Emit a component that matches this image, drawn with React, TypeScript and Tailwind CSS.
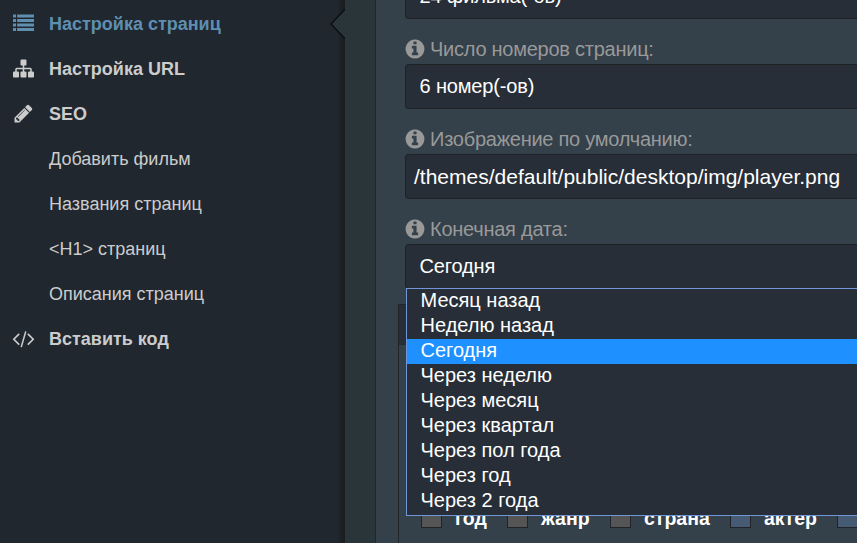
import type { ReactNode } from "react";

function Icon({ d, size, className = "" }: { d: string; size: number; className?: string }) {
  return (
    <svg width={size} height={size} viewBox="0 0 1792 1792" fill="currentColor" className={`shrink-0 overflow-visible ${className}`}>
      <path d={d} />
    </svg>
  );
}

const LIST =
  "M0 128h256v256h-256zM0 512h256v256h-256zM0 896h256v256h-256zM0 1280h256v256h-256zM350 128h1442v256h-1442zM350 512h1442v256h-1442zM350 896h1442v256h-1442zM350 1280h1442v256h-1442z";
const SITEMAP =
  "M1792 1248v320q0 40-28 68t-68 28h-320q-40 0-68-28t-28-68v-320q0-40 28-68t68-28h96v-192h-512v192h96q40 0 68 28t28 68v320q0 40-28 68t-68 28h-320q-40 0-68-28t-28-68v-320q0-40 28-68t68-28h96v-192h-512v192h96q40 0 68 28t28 68v320q0 40-28 68t-68 28h-320q-40 0-68-28t-28-68v-320q0-40 28-68t68-28h96v-192q0-52 38-90t90-38h512v-192h-96q-40 0-68-28t-28-68v-320q0-40 28-68t68-28h320q40 0 68 28t28 68v320q0 40-28 68t-68 28h-96v192h512q52 0 90 38t38 90v192h96q40 0 68 28t28 68z";
const PENCIL =
  "M491 1536l91-91-235-235-91 91v107h128v128h107zm523-928q0-22-22-22-10 0-17 7l-542 542q-7 7-7 17 0 22 22 22 10 0 17-7l542-542q7-7 7-17zm-54-192l416 416-832 832h-416v-416zm683 96q0 53-37 90l-166 166-416-416 166-165q36-38 90-38 53 0 91 38l235 234q37 39 37 91z";
const CODE =
  "M553 1399l-50 50q-10 10-23 10t-23-10l-466-466q-10-10-10-23t10-23l466-466q10-10 23-10t23 10l50 50q10 10 10 23t-10 23l-393 393 393 393q10 10 10 23t-10 23zm591-1067l-373 1291q-4 13-15.5 19.5t-23.5 2.5l-62-17q-13-4-19.5-15.5t-2.5-24.5l373-1291q4-13 15.5-19.5t23.5-2.5l62 17q13 4 19.5 15.5t2.5 24.5zm657 651l-466 466q-10 10-23 10t-23-10l-50-50q-10-10-10-23t10-23l393-393-393-393q-10-10-10-23t10-23l50-50q10-10 23-10t23 10l466 466q10 10 10 23t-10 23z";
const INFO =
  "M1152 1376v-160q0-14-9-23t-23-9h-96v-512q0-14-9-23t-23-9h-320q-14 0-23 9t-9 23v160q0 14 9 23t23 9h96v320h-96q-14 0-23 9t-9 23v160q0 14 9 23t23 9h448q14 0 23-9t9-23zm-128-896v-160q0-14-9-23t-23-9h-192q-14 0-23 9t-9 23v160q0 14 9 23t23 9h192q14 0 23-9t9-23zm640 416q0 209-103 385.5t-279.5 279.5-385.5 103-385.5-103-279.5-279.5-103-385.5 103-385.5 279.5-279.5 385.5-103 385.5 103 279.5 279.5 103 385.5z";

const menu = [
  { text: "Настройка страниц", icon: LIST, active: true },
  { text: "Настройка URL", icon: SITEMAP },
  { text: "SEO", icon: PENCIL },
  { text: "Добавить фильм" },
  { text: "Названия страниц" },
  { text: "<H1> страниц" },
  { text: "Описания страниц" },
  { text: "Вставить код", icon: CODE },
];

const options = [
  "Месяц назад",
  "Неделю назад",
  "Сегодня",
  "Через неделю",
  "Через месяц",
  "Через квартал",
  "Через пол года",
  "Через год",
  "Через 2 года",
];

function Label({ children }: { children: ReactNode }) {
  return (
    <div className="flex h-[45px] items-center pt-[15px] pl-px tracking-[-0.25px] text-[#999]">
      <Icon d={INFO} size={22} className="-mt-px -ml-0.5" />
      <span className="ml-1">{children}</span>
    </div>
  );
}

function Field({ children, className = "pb-0.5 pl-[13.5px] tracking-[-0.15px]" }: { children: ReactNode; className?: string }) {
  return (
    <div className={`flex h-[45px] items-center rounded-l-[4px] border border-r-0 border-[#1e2225] bg-[#272e38] text-white ${className}`}>
      {children}
    </div>
  );
}

function Check({ text, blue = false, className }: { text?: string; blue?: boolean; className: string }) {
  return (
    <div className={`flex shrink-0 items-center ${className}`}>
      <span className={`size-[21px] shrink-0 border border-[#202428] ${blue ? "bg-[#465a73]" : "bg-[#555]"}`} />
      {text && <span className="-mb-0.5 ml-[13px]">{text}</span>}
    </div>
  );
}

export default function App() {
  return (
    <div className="flex h-[543px] w-[857px] overflow-hidden bg-[#34404a] font-['Liberation_Sans',Arial,sans-serif] text-[20px] whitespace-nowrap">
      <nav className="relative w-[345px] shrink-0 bg-[#20272e] pt-px text-[18px] text-[#ccc]">
        {menu.map((m) => (
          <div key={m.text} className={`flex h-[45px] items-center pl-[13px] ${m.icon ? "font-bold" : ""} ${m.active ? "text-[#5f8fb0]" : ""}`}>
            <span className="flex w-9 shrink-0">{m.icon && <Icon d={m.icon} size={21} />}</span>
            <span className="pt-0.5">{m.text}</span>
          </div>
        ))}
        <div className="absolute inset-y-0 right-0 w-2 bg-gradient-to-r from-transparent to-[#191b1d]" />
        <svg className="absolute top-[9px] right-0" width="15" height="31" viewBox="0 0 15 31">
          <path d="M15 0.5L1 15L15 29.5Z" fill="#2a353a" />
          <path d="M15 0.5L1 15L15 29.5" fill="none" stroke="#090b0c" strokeWidth="1.2" />
        </svg>
      </nav>
      <div className="w-[30px] shrink-0 bg-[#2a353a]" />
      <main className="relative min-w-0 flex-1 border-l border-[#20272b] pl-[29px]">
        <div className="-mt-[26px]">
          <Field>24 фильма(-ов)</Field>
        </div>
        <Label>Число номеров страниц:</Label>
        <Field>6 номер(-ов)</Field>
        <Label>Изображение по умолчанию:</Label>
        <Field className="pl-2 text-[21px]">/themes/default/public/desktop/img/player.png</Field>
        <Label>Конечная дата:</Label>
        <div className="h-[60px]">
          <Field>Сегодня</Field>
        </div>
        <section className="-ml-[7px] h-[239px] border-t border-l border-[#20252a]">
          <div className="h-10 bg-[#272e38]" />
          <div className="flex h-[183px] items-end pl-[22px] text-[19.5px] leading-[21px] font-bold text-white">
            <Check text="год" className="w-[86px]" />
            <Check text="жанр" className="w-[103px]" />
            <Check text="страна" className="w-[120px]" />
            <Check text="актер" blue className="w-[107px]" />
            <Check blue className="w-[21px]" />
          </div>
        </section>
        <div className="absolute top-[288px] right-0 left-[30px] border border-r-0 border-[#7196d8] bg-[#272e38] pb-px text-white">
          {options.map((o) => (
            <div key={o} className={`h-[25px] pl-[13.5px] leading-[23px] ${o === "Сегодня" ? "bg-[#1e90ff]" : ""}`}>
              {o}
            </div>
          ))}
        </div>
      </main>
    </div>
  );
}
